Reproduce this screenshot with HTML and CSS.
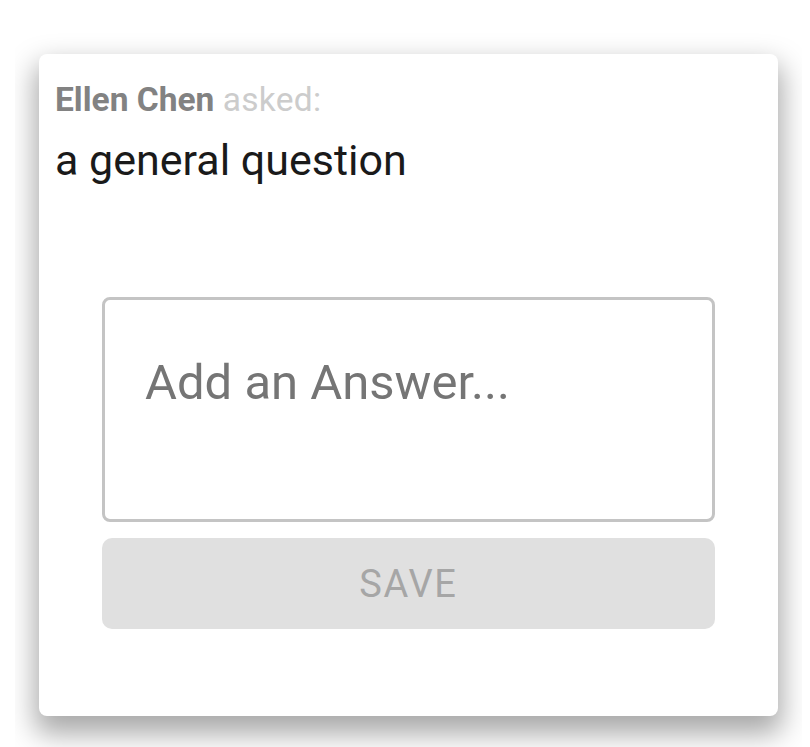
FILE: index.html
```html
<!DOCTYPE html>
<html>
<head>
<meta charset="utf-8">
<link rel="stylesheet" href="styles.css">
</head>
<body>
<div class="frame">
  <div class="card">
    <div class="asker"><span class="name">Ellen Chen</span> <span class="asked">asked:</span></div>
    <div class="question">a general question</div>
    <div class="answer">
      <div class="field"><span class="placeholder">Add an Answer...</span></div>
      <button class="save">SAVE</button>
    </div>
  </div>
</div>
</body>
</html>
```

FILE: styles.css
```css
html, body {
  margin: 0;
  padding: 0;
  background: #ffffff;
  font-family: Roboto, "Liberation Sans", sans-serif;
}
body {
  height: 747px;
  overflow: hidden;
}
.frame {
  margin: 30px 8px 0 15px;
  padding: 24px 24px 60px 24px;
  overflow: hidden;
  height: 740px;
  box-sizing: border-box;
}
.card {
  background: #ffffff;
  border-radius: 8px;
  box-shadow: 0 14px 28px 4px rgba(0, 0, 0, 0.34);
  height: 662px;
  box-sizing: border-box;
  padding: 27px 16px 0 16px;
  display: flex;
  flex-direction: column;
}
.asker {
  font-size: 33.5px;
  line-height: 38px;
  white-space: nowrap;
}
.name {
  font-weight: 700;
  color: #828282;
}
.asked {
  color: #cccccc;
  letter-spacing: 0.3px;
}
.question {
  margin-top: 16px;
  font-size: 43px;
  line-height: 50px;
  color: #1a1a1a;
}
.answer {
  margin-top: 112px;
  align-self: center;
  width: 613px;
  display: flex;
  flex-direction: column;
  gap: 16px;
}
.field {
  height: 225px;
  box-sizing: border-box;
  border: 3px solid #c4c4c4;
  border-radius: 8px;
  padding: 53px 0 0 40px;
}
.placeholder {
  font-size: 49px;
  line-height: 60px;
  color: #757575;
}
.save {
  height: 91px;
  border: none;
  border-radius: 10px;
  background: #e0e0e0;
  color: #a6a6a6;
  font-family: Roboto, "Liberation Sans", sans-serif;
  font-size: 38px;
  letter-spacing: 1.7px;
  padding: 0;
}
```
